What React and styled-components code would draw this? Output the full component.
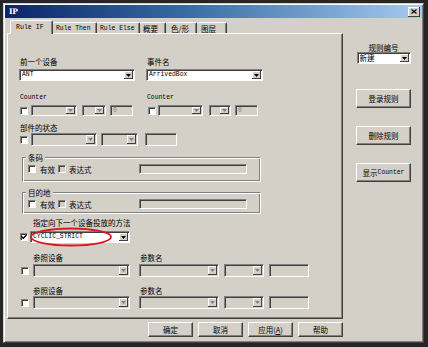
import React from 'react';
import styled, { createGlobalStyle } from 'styled-components';

const FACE = '#d4d0c8';

const Global = createGlobalStyle`
  html, body { margin: 0; padding: 0; background: #222; }
  body { font-family: "Noto Sans CJK SC", "Noto Sans", sans-serif; color: #000; }
  * { box-sizing: border-box; }
`;

const Screen = styled.div`
  width: 428px;
  height: 347px;
  background: #262626;
  padding: 3px 4px 4px 3px;
`;

const Window = styled.div`
  height: 100%;
  background: ${FACE};
  border: 1px solid;
  border-color: ${FACE} #404040 #404040 ${FACE};
  box-shadow: inset 1px 1px #fff, inset -1px -1px #808080;
  padding: 1px;
  display: flex;
  flex-direction: column;
`;

const TitleBar = styled.div`
  height: 13px;
  background: linear-gradient(90deg, #0a246a 0%, #3a6ea5 45%, #a6caf0 100%);
  display: flex;
  align-items: center;
  justify-content: space-between;
  padding: 0 2px 0 4px;
`;

const Title = styled.span`
  color: #fff;
  font-family: "DejaVu Serif", "Liberation Serif", serif;
  font-weight: bold;
  font-size: 7.5px;
  letter-spacing: -0.3px;
`;

const CloseBtn = styled.div`
  width: 12px;
  height: 10px;
  background: ${FACE};
  box-shadow: inset -1px -1px #404040, inset 1px 1px #fff;
  display: flex;
  align-items: center;
  justify-content: center;
`;

const Body = styled.div`
  display: flex;
  gap: 13px;
  padding: 2px 0 0 2px;
`;

const MainCol = styled.div`
  width: 336px;
  display: flex;
  flex-direction: column;
`;

const TabRow = styled.div`
  display: flex;
  align-items: flex-end;
  height: 13px;
  padding-left: 3px;
  position: relative;
  z-index: 1;
`;

const Tab = styled.div`
  width: ${p => p.$w}px;
  height: ${p => (p.$active ? 14 : 11)}px;
  margin-bottom: ${p => (p.$active ? -1 : 0)}px;
  background: ${FACE};
  border-top: 1px solid #fff;
  border-left: ${p => (p.$first ? '1px solid #fff' : 'none')};
  border-right: 1px solid #404040;
  border-radius: 2px 2px 0 0;
  box-shadow: inset -1px 0 #808080;
  display: flex;
  align-items: center;
  padding-left: ${p => p.$pl || 3}px;
  font-size: 7.5px;
  white-space: nowrap;
  overflow: hidden;
`;

const Latin = styled.span`
  font-family: "Liberation Mono", "DejaVu Sans Mono", monospace;
  font-size: ${p => p.$fs || 6.4}px;
  font-weight: ${p => (p.$bold ? 'bold' : 'normal')};
`;

const Panel = styled.div`
  width: 336px;
  height: 286px;
  border: 1px solid;
  border-color: #fff #404040 #404040 #fff;
  box-shadow: inset -1px -1px #808080;
  padding: 0 0 0 11px;
  display: flex;
  flex-direction: column;
`;

const Pair = styled.div`
  display: grid;
  grid-template-columns: ${p => p.$col}px auto;
  padding-left: ${p => p.$pl || 0}px;
  margin-top: ${p => p.$mt}px;
  align-items: center;
`;

const Label = styled.div`
  height: 9px;
  line-height: 9px;
  font-size: 7.5px;
  white-space: nowrap;
  margin-top: ${p => p.$mt || 0}px;
  margin-left: ${p => p.$ml || 0}px;
`;

const Row = styled.div`
  display: flex;
  align-items: center;
  height: ${p => p.$h || 12}px;
  margin-top: ${p => p.$mt || 0}px;
  position: relative;
`;

const Combo = styled.div`
  width: ${p => p.$w}px;
  height: ${p => p.$h || 12}px;
  margin-left: ${p => p.$ml || 0}px;
  background: ${p => (p.$on ? '#fff' : FACE)};
  border: 1px solid;
  border-color: #808080 #fff #fff #808080;
  box-shadow: inset 1px 1px #404040;
  display: flex;
  align-items: center;
  padding: 1px 1px 1px 2px;
  flex-shrink: 0;
`;

const ComboText = styled.div`
  flex: 1;
  overflow: hidden;
  white-space: nowrap;
  font-size: 7.5px;
  line-height: 10px;
  height: 10px;
  display: flex;
  align-items: center;
`;

const ArrowBtn = styled.div`
  width: 9px;
  height: 100%;
  background: ${FACE};
  box-shadow: inset -1px -1px #404040, inset 1px 1px #fff;
  display: flex;
  align-items: center;
  justify-content: center;
`;

const Edit = styled.div`
  width: ${p => p.$w}px;
  height: ${p => p.$h || 12}px;
  margin-left: ${p => (p.$auto ? 'auto' : `${p.$ml || 0}px`)};
  margin-right: ${p => p.$mr || 0}px;
  background: ${FACE};
  border: 1px solid;
  border-color: #808080 #fff #fff #808080;
  box-shadow: inset 1px 1px #404040;
  color: #808080;
  display: flex;
  align-items: center;
  padding-left: 2px;
  flex-shrink: 0;
`;

const Check = styled.div`
  width: 8px;
  height: 8px;
  margin-left: ${p => p.$ml || 0}px;
  background: ${p => (p.$off ? FACE : '#fff')};
  border: 1px solid;
  border-color: #808080 #fff #fff #808080;
  box-shadow: inset 1px 1px #404040;
  flex-shrink: 0;
  display: flex;
  align-items: center;
  justify-content: center;
`;

const Group = styled.div`
  width: 239px;
  height: ${p => p.$h}px;
  margin-left: 3px;
  margin-top: ${p => p.$mt}px;
  border: 1px solid;
  border-color: #808080 #fff #fff #808080;
  box-shadow: inset 1px 1px #fff, inset -1px -1px #808080;
  padding-top: ${p => p.$pt}px;
  position: relative;
`;

const Legend = styled.div`
  position: absolute;
  left: 3px;
  top: -5px;
  padding: 0 2px;
  background: ${FACE};
  font-size: 7.5px;
  line-height: 9px;
`;

const Text = styled.span`
  font-size: 7.5px;
  line-height: 9px;
  margin-left: ${p => p.$ml || 0}px;
  white-space: nowrap;
`;

const Ellipse = styled.svg`
  position: absolute;
  left: 9px;
  top: -4px;
  pointer-events: none;
`;

const BottomBar = styled.div`
  display: flex;
  justify-content: flex-end;
  gap: 5px;
  margin-top: 3px;
`;

const Button = styled.div`
  width: ${p => p.$w || 45}px;
  height: ${p => p.$h || 15}px;
  margin-top: ${p => p.$mt || 0}px;
  background: ${FACE};
  border: 1px solid;
  border-color: #fff #404040 #404040 #fff;
  box-shadow: inset -1px -1px #808080;
  display: flex;
  align-items: center;
  justify-content: center;
  font-size: 7.5px;
  white-space: nowrap;
`;

const SideCol = styled.div`
  width: 55px;
  display: flex;
  flex-direction: column;
  align-items: center;
  padding-top: 23px;
`;

const Arrow = ({ on }) => (
  <svg width="5" height="3" viewBox="0 0 5 3">
    <path d="M0 0H5L2.5 3Z" fill={on ? '#000' : '#808080'} />
  </svg>
);

const Drop = ({ w, h, ml, on, children }) => (
  <Combo $w={w} $h={h} $ml={ml} $on={on}>
    <ComboText>{children}</ComboText>
    <ArrowBtn>
      <Arrow on={on} />
    </ArrowBtn>
  </Combo>
);

const Tick = () => (
  <svg width="6" height="6" viewBox="0 0 6 6">
    <path d="M0.5 2.5L2.3 4.3L5.5 1" stroke="#000" strokeWidth="1.3" fill="none" />
  </svg>
);

const ChoiceRow = () => (
  <Row $h={10}>
    <Check $ml={5} />
    <Text $ml={4}>有效</Text>
    <Check $ml={3} $off />
    <Text $ml={3}>表达式</Text>
    <Edit $w={108} $h={10} $auto $mr={13} />
  </Row>
);

const RefRow = ({ mt }) => (
  <Row $h={13} $mt={mt}>
    <Check $ml={2} />
    <Drop w={97} h={13} ml={4} />
    <Drop w={80} h={13} ml={9} />
    <Drop w={40} h={13} ml={5} />
    <Edit $w={40} $h={13} $ml={5} />
  </Row>
);

export default function App() {
  return (
    <>
      <Global />
      <Screen>
        <Window>
          <TitleBar>
            <Title>IP</Title>
            <CloseBtn>
              <svg width="6" height="5" viewBox="0 0 6 5">
                <path d="M0.5 0.5L5.5 4.5M5.5 0.5L0.5 4.5" stroke="#000" strokeWidth="1.2" />
              </svg>
            </CloseBtn>
          </TitleBar>
          <Body>
            <MainCol>
              <TabRow>
                <Tab $w={43} $active $first $pl={5}><Latin $fs={6.6}>Rule IF</Latin></Tab>
                <Tab $w={44}><Latin $fs={6.4}>Rule Then</Latin></Tab>
                <Tab $w={43}><Latin $fs={6.4}>Rule Else</Latin></Tab>
                <Tab $w={26}>概要</Tab>
                <Tab $w={31} $pl={5}>色/形</Tab>
                <Tab $w={30} $pl={4}>图层</Tab>
              </TabRow>
              <Panel>
                <Pair $col={127} $pl={1} $mt={23}>
                  <Label>前一个设备</Label>
                  <Label>事件名</Label>
                </Pair>
                <Pair $col={127} $mt={3}>
                  <Drop w={116} h={12} on><Latin>ANT</Latin></Drop>
                  <Drop w={117} h={12} on><Latin>ArrivedBox</Latin></Drop>
                </Pair>
                <Pair $col={127} $pl={1} $mt={10}>
                  <Label><Latin>Counter</Latin></Label>
                  <Label><Latin>Counter</Latin></Label>
                </Pair>
                <Row $h={11} $mt={5}>
                  <Check $ml={1} />
                  <Drop w={46} h={11} ml={3} />
                  <Drop w={24} h={11} ml={5} />
                  <Edit $w={23} $h={11} $ml={4}><Latin>0</Latin></Edit>
                  <Check $ml={15} />
                  <Drop w={45} h={11} ml={2} />
                  <Drop w={22} h={11} ml={6} />
                  <Edit $w={23} $h={11} $ml={4}><Latin>0</Latin></Edit>
                </Row>
                <Label $mt={7} $ml={1}>部件的状态</Label>
                <Row $h={13} $mt={1}>
                  <Check $ml={1} />
                  <Drop w={66} h={13} ml={3} />
                  <Drop w={37} h={13} ml={4} />
                  <Edit $w={32} $h={13} $ml={7} />
                </Row>
                <Group $mt={11} $h={25} $pt={6}>
                  <Legend>条码</Legend>
                  <ChoiceRow />
                </Group>
                <Group $mt={10} $h={22} $pt={6}>
                  <Legend>目的地</Legend>
                  <ChoiceRow />
                </Group>
                <Label $mt={4} $ml={14}>指定向下一个设备投放的方法</Label>
                <Row $h={12} $mt={4}>
                  <Check $ml={1}><Tick /></Check>
                  <Drop w={100} h={12} ml={2} on><Latin>CYCLIC_STRICT</Latin></Drop>
                  <Ellipse width="84" height="20" viewBox="0 0 84 20">
                    <ellipse cx="43" cy="10" rx="40" ry="8.5" stroke="#e0141e" strokeWidth="1.8" fill="none" />
                  </Ellipse>
                </Row>
                <Pair $col={107} $pl={14} $mt={10}>
                  <Label>参照设备</Label>
                  <Label>参数名</Label>
                </Pair>
                <RefRow mt={2} />
                <Pair $col={107} $pl={14} $mt={9}>
                  <Label>参照设备</Label>
                  <Label>参数名</Label>
                </Pair>
                <RefRow mt={1} />
              </Panel>
              <BottomBar>
                <Button>确定</Button>
                <Button>取消</Button>
                <Button>应用(<u>A</u>)</Button>
                <Button>帮助</Button>
              </BottomBar>
            </MainCol>
            <SideCol>
              <Label>规则编号</Label>
              <Drop w={54} h={12} on>新建</Drop>
              <Button $w={55} $h={19} $mt={25}>登录规则</Button>
              <Button $w={55} $h={19} $mt={18}>删除规则</Button>
              <Button $w={55} $h={19} $mt={18}>显示<Latin>Counter</Latin></Button>
            </SideCol>
          </Body>
        </Window>
      </Screen>
    </>
  );
}
